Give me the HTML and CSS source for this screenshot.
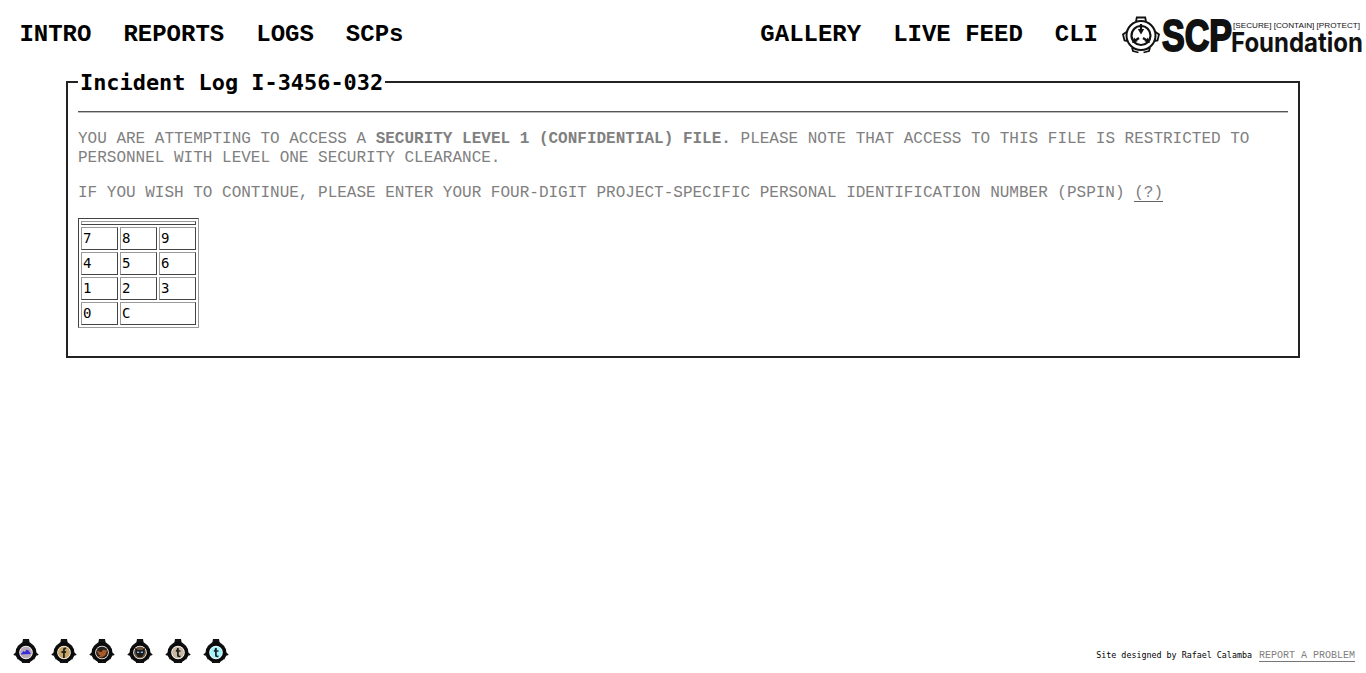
FILE: index.html
```html
<!DOCTYPE html>
<html lang="en">
<head>
<meta charset="utf-8">
<title>Incident Log I-3456-032</title>
<link rel="stylesheet" href="styles.css">
</head>
<body>
<svg class="defs" width="0" height="0" aria-hidden="true">
  <defs>
    <g id="ring">
      <path d="M10 1h6l.8 4.500H9.200zM2.500 14.500L.5 16.400v.7l3 .9 1.500-2zM23.500 14.500l2 1.900v.7l-3 .9-1.500-2z" fill="#111"/>
      <circle cx="13" cy="14.500" r="8.600" fill="#fff" stroke="#0a0a0a" stroke-width="3.600"/>
      <path d="M5 9.500l5-4.500M21 9.500l-5-4.500M5.500 21l-2-4M20.500 21l2-4M9 24h8" stroke="#111" stroke-width="1.800" fill="none"/>
    </g>
  </defs>
</svg>
<header class="topbar">
  <nav class="nav nav-left">
    <a href="#">INTRO</a>
    <a href="#">REPORTS</a>
    <a href="#">LOGS</a>
    <a href="#">SCPs</a>
  </nav>
  <div class="right">
    <nav class="nav">
      <a href="#">GALLERY</a>
      <a href="#">LIVE FEED</a>
      <a href="#">CLI</a>
    </nav>
    <a class="logo" href="#">
      <svg class="logo-art" viewBox="0 0 243 44" role="img" aria-label="SCP Foundation">
        <g fill="none" stroke="#111">
          <circle cx="20" cy="24.500" r="14.500" stroke-width="2"/>
          <circle cx="20" cy="24.500" r="9.500" stroke-width="2.200"/>
          <path d="M15 10.500l.8-4h8.400l.8 4M5.500 21l-3.500 2.500 1.500 6 3.700.5M34.500 21l3.500 2.500-1.500 6-3.700.5M11 36.500l1 3.500 5.500 1.500M29 36.500l-1 3.500-5.500 1.500" stroke-width="1.800"/>
          <path d="M20 13v8M12 31l6-4M28 31l-6-4" stroke-width="2.200"/>
        </g>
        <path d="M16.800 18h6.400L20 23.500zM13 26.500l3.500 3.800-5.500 1.700zM27 26.500l-3.500 3.800 5.500 1.700z" fill="#111"/>
        <text class="mark" x="41" y="40" textLength="70" lengthAdjust="spacingAndGlyphs">SCP</text>
        <text class="motto" x="112" y="17" textLength="127" lengthAdjust="spacingAndGlyphs">[SECURE] [CONTAIN] [PROTECT]</text>
        <text class="foundation" x="110" y="41" textLength="132" lengthAdjust="spacingAndGlyphs">Foundation</text>
      </svg>
    </a>
  </div>
</header>

<main class="content">
  <fieldset class="panel">
    <legend class="panel-title">Incident Log I-3456-032</legend>
    <hr class="rule">
    <p class="notice">YOU ARE ATTEMPTING TO ACCESS A <b>SECURITY LEVEL 1 (CONFIDENTIAL) FILE.</b> PLEASE NOTE THAT ACCESS TO THIS FILE IS RESTRICTED TO PERSONNEL WITH LEVEL ONE SECURITY CLEARANCE.</p>
    <p class="notice">IF YOU WISH TO CONTINUE, PLEASE ENTER YOUR FOUR-DIGIT PROJECT-SPECIFIC PERSONAL IDENTIFICATION NUMBER (PSPIN) <a class="help" href="#">(?)</a></p>
    <table class="keypad">
      <tr><td class="display" colspan="3"></td></tr>
      <tr><td>7</td><td>8</td><td>9</td></tr>
      <tr><td>4</td><td>5</td><td>6</td></tr>
      <tr><td>1</td><td>2</td><td>3</td></tr>
      <tr><td>0</td><td colspan="2">C</td></tr>
    </table>
  </fieldset>
</main>

<footer class="footer">
  <div class="socials">
    <a class="social" href="#"><svg viewBox="0 0 26 28"><use href="#ring"/><circle cx="13" cy="14.500" r="6" fill="#b9aab8"/><path d="M7.500 16.500l3-3.500 1.500 1 1.500-2.500 2 1 2.500 3.500z" fill="#3a2bd8"/></svg></a>
    <a class="social" href="#"><svg viewBox="0 0 26 28"><use href="#ring"/><circle cx="13" cy="14.500" r="6" fill="#c9a866"/><path d="M12 20v-5h-1.500v-2H12v-1.500c0-1.500 1-2.200 3.200-2v1.800c-1-.1-1.400 0-1.400.7V13h1.400l-.2 2h-1.200v5z" fill="#222"/></svg></a>
    <a class="social" href="#"><svg viewBox="0 0 26 28"><use href="#ring"/><circle cx="13" cy="14.500" r="6" fill="#2a211c"/><path d="M7.500 11.500c2 2 3.500 2.500 5.200 2.600-.2-2 2.200-3.300 3.700-1.800l1.700-.6-1 1.500 1.200-.2-1 1.200c0 3.500-4.500 6.500-9 4.200 1.500 0 2.500-.4 3.200-1-1.500-.2-2.200-1-2.500-1.800h1.200c-1.400-.5-2-1.500-2-2.500l1 .3c-1.200-.8-1.300-1.500-.4-2z" fill="#a85a28"/></svg></a>
    <a class="social" href="#"><svg viewBox="0 0 26 28"><use href="#ring"/><circle cx="13" cy="14.500" r="6" fill="#6b5238"/><path d="M8 10l3 2h4l3-2-.6 5-2.400 4h-4l-2.400-4z" fill="#1a1a1a"/><path d="M10 13.500h2.200v1.500H10zM13.800 13.500H16v1.500h-2.200z" fill="#7fb4e0"/></svg></a>
    <a class="social" href="#"><svg viewBox="0 0 26 28"><use href="#ring"/><circle cx="13" cy="14.500" r="6" fill="#c9b8a2"/><path d="M12 10h1.800v2.200h1.700v1.600h-1.700v3.200c0 .7.600.8 1.700.6v1.500c-2 .5-3.500 0-3.500-1.800v-3.500h-1.200v-1.400c.8-.3 1.200-1 1.200-2.400z" fill="#222"/></svg></a>
    <a class="social" href="#"><svg viewBox="0 0 26 28"><use href="#ring"/><circle cx="13" cy="14.500" r="6" fill="#9ff5fb"/><path d="M12 10h1.800v2.200h1.700v1.600h-1.700v3.200c0 .7.600.8 1.700.6v1.500c-2 .5-3.500 0-3.500-1.800v-3.500h-1.200v-1.400c.8-.3 1.200-1 1.200-2.400z" fill="#222"/></svg></a>
  </div>
  <div class="credit">
    <span class="designer">Site designed by Rafael Calamba</span>
    <a class="report" href="#">REPORT A PROBLEM</a>
  </div>
</footer>
</body>
</html>
```
FILE: styles.css
```css
html, body {
  margin: 0;
  height: 100%;
}
body {
  display: flex;
  flex-direction: column;
  height: 673px;
  overflow: hidden;
  background: #fff;
  color: #000;
  font-family: "Liberation Mono", "Courier New", monospace;
}
.defs {
  position: absolute;
}
a {
  color: inherit;
  text-decoration: none;
}
.topbar {
  display: flex;
  justify-content: space-between;
  align-items: center;
  height: 65px;
  padding: 0 2px 0 19.400px;
  flex: none;
}
.right {
  display: flex;
  align-items: center;
  gap: 23px;
}
.nav {
  display: flex;
  gap: 32px;
  padding-top: 4px;
  font-size: 24px;
  font-weight: 700;
  line-height: 28px;
  white-space: pre;
}
.logo {
  display: block;
  height: 44px;
}
.logo-art {
  display: block;
  width: 243px;
  height: 44px;
  overflow: visible;
}
.mark {
  font-family: "Liberation Sans", Arial, sans-serif;
  font-size: 44px;
  font-weight: 700;
  fill: #111;
  stroke: #111;
  stroke-width: 2px;
}
.motto {
  font-family: "Liberation Sans", Arial, sans-serif;
  font-size: 8px;
  fill: #111;
}
.foundation {
  font-family: Inter, "Liberation Sans", sans-serif;
  font-size: 27px;
  font-weight: 700;
  fill: #111;
}
.content {
  padding: 0 66px;
  flex: none;
}
.panel {
  margin: 0;
  padding: 0 10px 28px;
  border: 2px solid #222;
  min-width: 0;
}
.panel-title {
  padding: 2px 2px 0;
  margin-left: 0;
  font-family: "DejaVu Sans Mono", Consolas, monospace;
  font-size: 21.900px;
  line-height: 32px;
  font-weight: 700;
}
.rule {
  margin: 12px 0 0;
  border: 0;
  border-top: 1px solid #555;
  border-bottom: 1px solid #bbb;
}
.notice {
  margin: 17px 0 0;
  color: #808080;
  font-size: 16px;
  line-height: 19px;
}
.notice + .notice {
  margin-top: 16px;
}
.help {
  display: inline-block;
  line-height: 16px;
  border-bottom: 1px solid #666;
}
.keypad {
  margin-top: 15px;
  border: 1px solid;
  border-color: #444 #999 #999 #444;
  border-spacing: 2px;
  font-family: "DejaVu Sans Mono", Consolas, monospace;
  font-size: 14px;
  width: 121px;
}
.keypad td {
  height: 19px;
  padding: 1px;
  border: 1px solid;
  border-color: #999 #444 #444 #999;
  width: 33px;
  box-sizing: content-box;
  line-height: 19px;
}
.keypad td.display {
  height: 0;
  padding: 1px;
  line-height: 0;
}
.footer {
  margin-top: auto;
  display: flex;
  justify-content: space-between;
  align-items: flex-end;
  padding: 0 11px 11px 13px;
  height: 35px;
  box-sizing: border-box;
  flex: none;
}
.socials {
  display: flex;
  gap: 12px;
  align-self: flex-start;
}
.social {
  display: block;
  width: 26px;
  height: 28px;
}
.social svg {
  display: block;
  width: 26px;
  height: 28px;
}
.credit {
  display: flex;
  gap: 7px;
  align-items: baseline;
  white-space: nowrap;
}
.designer {
  font-family: "DejaVu Sans Mono", Consolas, monospace;
  font-size: 8.360px;
  line-height: 12px;
}
.report {
  color: #808080;
  font-size: 10px;
  line-height: 11px;
  border-bottom: 1px solid #777;
}
```
